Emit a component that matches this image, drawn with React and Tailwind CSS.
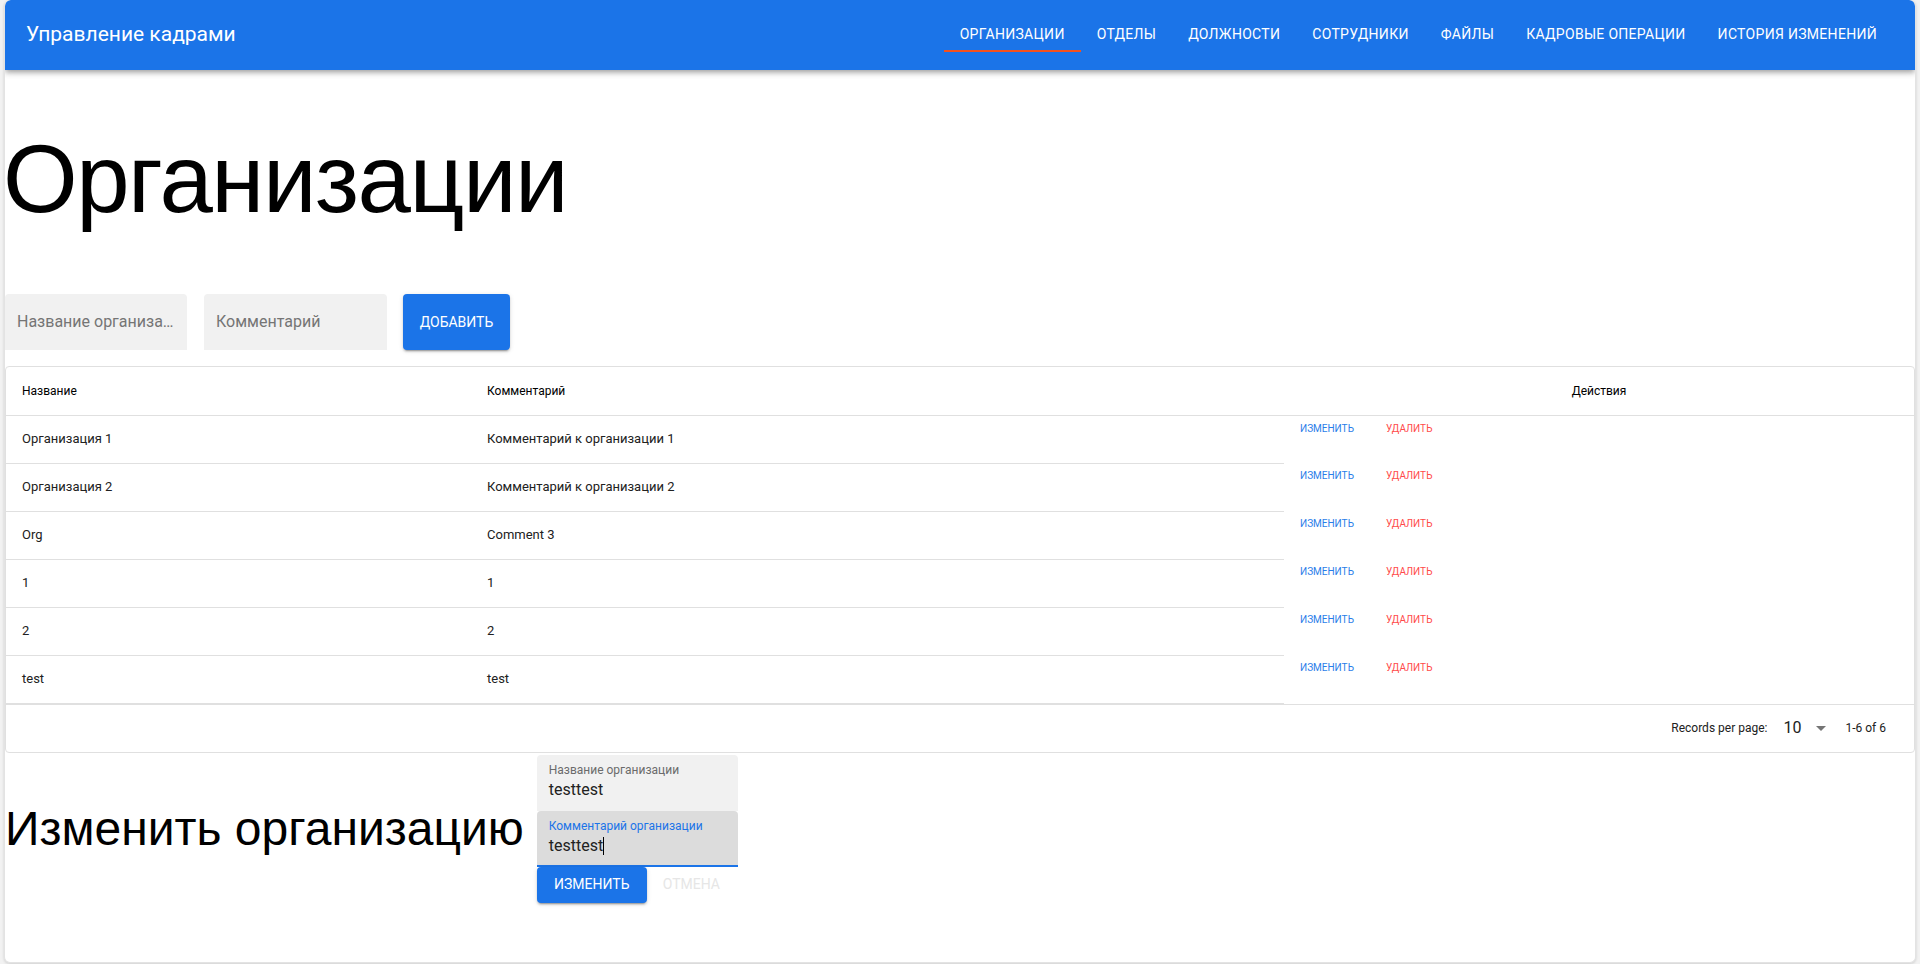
import React, { useState } from 'react';

const tabs = ['Организации', 'Отделы', 'Должности', 'Сотрудники', 'Файлы', 'Кадровые операции', 'История изменений'];

const rows = [
  { id: 1, name: 'Организация 1', comment: 'Комментарий к организации 1' },
  { id: 2, name: 'Организация 2', comment: 'Комментарий к организации 2' },
  { id: 3, name: 'Org', comment: 'Comment 3' },
  { id: 4, name: '1', comment: '1' },
  { id: 5, name: '2', comment: '2' },
  { id: 6, name: 'test', comment: 'test' },
];

function Header() {
  return (
    <header className="h-[70px] bg-[#1b74e8] rounded-t-[6px] flex items-center justify-between pl-[21px] pr-[22px] shadow-[0_2px_4px_-1px_rgba(0,0,0,0.2),0_4px_5px_0_rgba(0,0,0,0.14),0_1px_10px_0_rgba(0,0,0,0.12)] relative z-10">
      <div className="text-white text-[21px] font-['Roboto',sans-serif]">Управление кадрами</div>
      <nav className="flex h-9 -mt-[2px]">
        {tabs.map((t, i) => (
          <div key={t} className="relative h-full flex items-center px-4 text-white text-[14px] tracking-[0.3px] uppercase font-['Roboto',sans-serif]">
            {t}
            {i === 0 && <span className="absolute left-0 right-0 bottom-0 h-[2px] bg-[#f4511e]" />}
          </div>
        ))}
      </nav>
    </header>
  );
}

function AddForm() {
  return (
    <div className="flex items-center mt-[59px] h-14">
      <div className="w-[182px] h-14 bg-[#f1f1f1] rounded-t-[4px] flex items-center px-3">
        <span className="truncate text-[16px] text-[#757575]">Название организации</span>
      </div>
      <div className="w-[183px] h-14 bg-[#f1f1f1] rounded-t-[4px] flex items-center px-3 ml-[17px]">
        <span className="truncate text-[16px] text-[#757575]">Комментарий</span>
      </div>
      <button className="ml-4 w-[107px] h-14 bg-[#1b74e8] rounded-[4px] text-white text-[14px] uppercase shadow-[0_3px_1px_-2px_rgba(0,0,0,0.2),0_2px_2px_0_rgba(0,0,0,0.14),0_1px_5px_0_rgba(0,0,0,0.12)]">
        Добавить
      </button>
    </div>
  );
}

function OrgTable() {
  return (
    <div className="mt-4 border border-[#e0e0e0] rounded-[4px] bg-white">
      <table className="w-full table-fixed border-collapse">
        <thead>
          <tr className="h-12 border-b border-[#e0e0e0]">
            <th className="w-[465px] text-left font-normal text-[12px] text-black px-4">Название</th>
            <th className="w-[813px] text-left font-normal text-[12px] text-black px-4">Комментарий</th>
            <th className="text-center font-normal text-[12px] text-black px-4">Действия</th>
          </tr>
        </thead>
        <tbody>
          {rows.map((r) => (
            <tr key={r.id} className="h-12">
              <td className="px-4 text-[13px] text-[#212121] border-b border-[#e0e0e0]">{r.name}</td>
              <td className="px-4 text-[13px] text-[#212121] border-b border-[#e0e0e0]">{r.comment}</td>
              <td className="px-4 align-top pt-[7px]">
                <div className="flex gap-8 text-[10px] leading-3">
                  <button className="uppercase text-[#2a7de9]">Изменить</button>
                  <button className="uppercase text-[#ff4a4a]">Удалить</button>
                </div>
              </td>
            </tr>
          ))}
        </tbody>
      </table>
      <div className="h-[48px] border-t border-[#e0e0e0] flex items-center justify-end pr-[28px] text-[12px] text-[#212121]">
        <span>Records per page:</span>
        <span className="ml-4 text-[16px]">10</span>
        <svg className="ml-[15px]" width="10" height="5" viewBox="0 0 10 5">
          <path d="M0 0h10L5 5z" fill="#757575" />
        </svg>
        <span className="ml-[19px]">1-6 of 6</span>
      </div>
    </div>
  );
}

function EditForm() {
  const [name] = useState('testtest');
  const [comment] = useState('testtest');
  return (
    <div className="flex items-center mt-[2px]">
      <h3 className="text-[48px] leading-[56px] text-black font-['Liberation_Sans',Arial,sans-serif] mr-[13px]">
        Изменить организацию
      </h3>
      <div className="w-[201px] flex flex-col">
        <div className="h-14 bg-[#f1f1f1] rounded-t-[4px] px-3 pt-[7px]">
          <div className="text-[12px] leading-4 text-[#6b6b6b]">Название организации</div>
          <div className="text-[16px] leading-5 text-[#212121] mt-[2px]">{name}</div>
        </div>
        <div className="h-14 bg-[#dcdcdc] rounded-t-[4px] px-3 pt-[7px] border-b-2 border-[#1b74e8]">
          <div className="text-[12px] leading-4 text-[#1b74e8]">Комментарий организации</div>
          <div className="text-[16px] leading-5 text-[#212121] mt-[2px] flex items-center">
            {comment}
            <span className="inline-block w-px h-[18px] bg-black" />
          </div>
        </div>
        <div className="flex items-center">
          <button className="w-[110px] h-9 bg-[#1b74e8] rounded-[4px] text-white text-[14px] uppercase shadow-[0_3px_1px_-2px_rgba(0,0,0,0.2),0_2px_2px_0_rgba(0,0,0,0.14),0_1px_5px_0_rgba(0,0,0,0.12)]">
            Изменить
          </button>
          <button className="h-9 px-4 text-[14px] uppercase text-[#e6e6e6]">Отмена</button>
        </div>
      </div>
    </div>
  );
}

export default function App() {
  return (
    <div className="bg-[#f2f2f2] px-1 pb-px font-['Roboto',sans-serif]">
      <div className="h-[963px] bg-white rounded-[6px] border border-t-0 border-[#e3e3e3] shadow-[0_1px_3px_rgba(0,0,0,0.15)] overflow-hidden">
        <Header />
        <h1 className="mt-[53px] -ml-[2px] text-[96px] leading-[112px] tracking-[-1.5px] text-black font-['Liberation_Sans',Arial,sans-serif]">
          Организации
        </h1>
        <AddForm />
        <OrgTable />
        <EditForm />
      </div>
    </div>
  );
}
